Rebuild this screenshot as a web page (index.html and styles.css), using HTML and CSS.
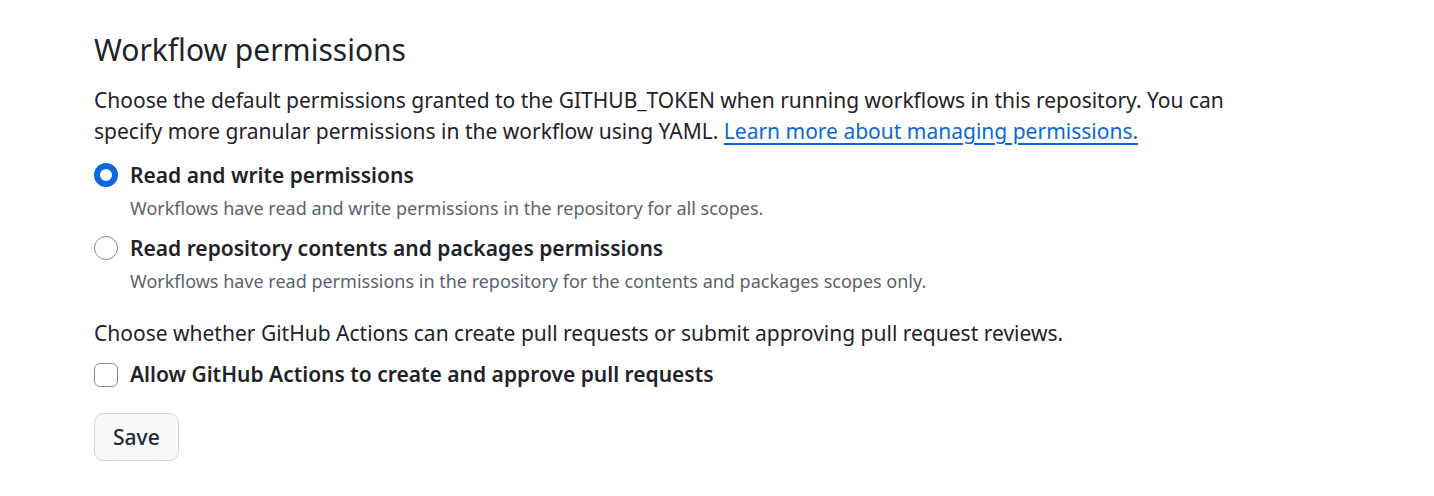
FILE: index.html
```html
<!DOCTYPE html>
<html lang="en">
<head>
    <meta charset="UTF-8">
    <meta name="viewport" content="width=device-width, initial-scale=1.0">
    <title>Workflow permissions</title>
    <link rel="stylesheet" href="styles.css">
</head>
<body>
    <div class="container">
        <h2 class="subhead">Workflow permissions</h2>
        <p class="note">
            Choose the default permissions granted to the GITHUB_TOKEN when running workflows in this repository. You can
            specify more granular permissions in the workflow using YAML. <a href="#">Learn more about managing permissions.</a>
        </p>

        <div class="option">
            <input type="radio" name="perm" id="permWrite" class="radio" checked>
            <div class="option-body">
                <label for="permWrite">Read and write permissions</label>
                <p class="caption">Workflows have read and write permissions in the repository for all scopes.</p>
            </div>
        </div>
        <div class="option next">
            <input type="radio" name="perm" id="permRead" class="radio">
            <div class="option-body">
                <label for="permRead">Read repository contents and packages permissions</label>
                <p class="caption">Workflows have read permissions in the repository for the contents and packages scopes only.</p>
            </div>
        </div>

        <p class="note second">Choose whether GitHub Actions can create pull requests or submit approving pull request reviews.</p>
        <div class="option check">
            <input type="checkbox" id="allowPr" class="checkbox">
            <div class="option-body">
                <label for="allowPr">Allow GitHub Actions to create and approve pull requests</label>
            </div>
        </div>

        <button class="btn">Save</button>
    </div>
</body>
</html>
```

FILE: styles.css
```css
body {
    font-family: "Noto Sans", sans-serif;
    margin: 0;
    padding: 0;
    background: #ffffff;
    color: #1f2328;
}
.container {
    padding: 26.5px 94px 24px;
}
.subhead {
    font-size: 30px;
    font-weight: 400;
    line-height: 45px;
    margin: 0 0 13px;
}
.note {
    font-size: 21px;
    line-height: 31.5px;
    margin: 0;
    max-width: 1180px;
}
.note a {
    color: #0969da;
    text-decoration: underline;
    text-underline-offset: 4px;
    text-decoration-thickness: 1.5px;
}
.note.second {
    margin-top: 23px;
}
.option {
    display: flex;
    align-items: flex-start;
    gap: 12px;
    margin-top: 12px;
}
.option.next {
    margin-top: 11px;
}
.option.check {
    margin-top: 10px;
}
.option-body label {
    display: block;
    font-size: 21px;
    font-weight: 600;
    line-height: 31.5px;
}
.caption {
    font-size: 18px;
    line-height: 27px;
    color: #59636e;
    margin: 3.5px 0 0;
}
.radio, .checkbox {
    appearance: none;
    flex: none;
    width: 24px;
    height: 24px;
    margin: 3.5px 0 0;
    border: 1.5px solid #818b98;
    background: #ffffff;
}
.radio {
    border-radius: 50%;
}
.radio:checked {
    border: 6px solid #0969da;
}
.checkbox {
    border-radius: 6px;
}
.btn {
    display: block;
    margin-top: 22px;
    height: 48px;
    padding: 0 18px;
    font-family: inherit;
    font-size: 21px;
    font-weight: 500;
    color: #25292e;
    background: #f6f8fa;
    border: 1.5px solid #d1d9e0;
    border-radius: 9px;
}
```
